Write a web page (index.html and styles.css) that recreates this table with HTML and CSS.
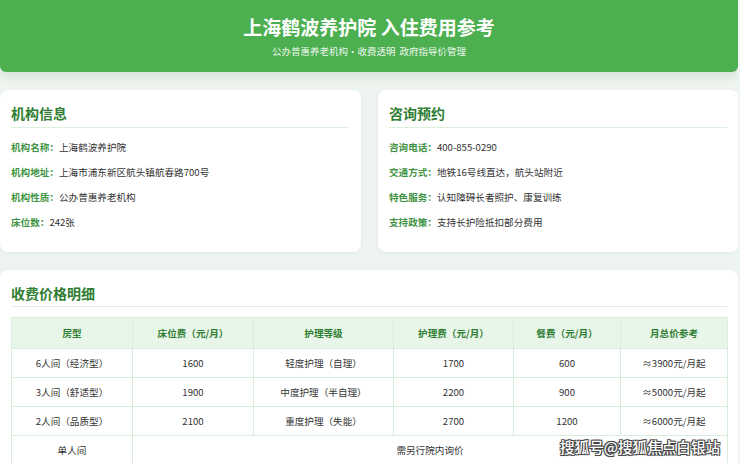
FILE: index.html
```html
<!DOCTYPE html>
<html lang="zh-CN">
<head>
<meta charset="utf-8">
<title>上海鹤波养护院 入住费用参考</title>
<link rel="stylesheet" href="styles.css">
</head>
<body>
<div class="page">
  <header class="header">
    <h1 class="header-title">上海鹤波养护院 入住费用参考</h1>
    <p class="header-sub">公办普惠养老机构·收费透明 政府指导价管理</p>
  </header>

  <section class="info-row">
    <div class="card">
      <h2 class="card-title">机构信息</h2>
      <div class="rows">
        <div class="row"><span class="label">机构名称：</span>上海鹤波养护院</div>
        <div class="row"><span class="label">机构地址：</span>上海市浦东新区航头镇航春路700号</div>
        <div class="row"><span class="label">机构性质：</span>公办普惠养老机构</div>
        <div class="row"><span class="label">床位数：</span>242张</div>
      </div>
    </div>
    <div class="card">
      <h2 class="card-title">咨询预约</h2>
      <div class="rows">
        <div class="row"><span class="label">咨询电话：</span>400-855-0290</div>
        <div class="row"><span class="label">交通方式：</span>地铁16号线直达，航头站附近</div>
        <div class="row"><span class="label">特色服务：</span>认知障碍长者照护、康复训练</div>
        <div class="row"><span class="label">支持政策：</span>支持长护险抵扣部分费用</div>
      </div>
    </div>
  </section>

  <section class="card price-card">
    <h2 class="card-title">收费价格明细</h2>
    <table class="price-table">
      <colgroup>
        <col class="c1"><col class="c2"><col class="c3"><col class="c4"><col class="c5"><col class="c6">
      </colgroup>
      <thead>
        <tr><th>房型</th><th>床位费（元/月）</th><th>护理等级</th><th>护理费（元/月）</th><th>餐费（元/月）</th><th>月总价参考</th></tr>
      </thead>
      <tbody>
        <tr><td>6人间（经济型）</td><td>1600</td><td>轻度护理（自理）</td><td>1700</td><td>600</td><td>≈3900元/月起</td></tr>
        <tr><td>3人间（舒适型）</td><td>1900</td><td>中度护理（半自理）</td><td>2200</td><td>900</td><td>≈5000元/月起</td></tr>
        <tr><td>2人间（品质型）</td><td>2100</td><td>重度护理（失能）</td><td>2700</td><td>1200</td><td>≈6000元/月起</td></tr>
        <tr><td>单人间</td><td colspan="5">需另行院内询价</td></tr>
      </tbody>
    </table>
  </section>

  <div class="watermark">搜狐号@搜狐焦点白银站</div>
</div>
</body>
</html>
```
FILE: styles.css
```css
* { box-sizing: border-box; }
html, body { margin: 0; padding: 0; }
body {
  background: #eef4ef;
  font-family: "Noto Sans CJK SC", "Noto Sans", sans-serif;
  color: #333;
  overflow: hidden;
}
.page {
  width: 738px;
  position: relative;
  height: 463px;
  overflow: hidden;
}
.header {
  height: 72px;
  background: #4caf50;
  border-radius: 0 0 6px 6px;
  box-shadow: 0 4px 10px rgba(40, 90, 40, 0.12);
  color: #fff;
  text-align: center;
  padding-top: 13px;
}
.header-title {
  margin: 0;
  font-size: 19px;
  line-height: 28px;
  font-weight: 700;
}
.header-sub {
  margin: 3px 0 0;
  font-size: 9.5px;
  line-height: 14px;
  color: rgba(255, 255, 255, 0.92);
  word-spacing: 2px;
}
.info-row {
  margin-top: 18px;
  display: grid;
  grid-template-columns: 361px 361px;
  column-gap: 17px;
}
.card {
  background: #fff;
  border-radius: 8px;
  box-shadow: 0 1px 4px rgba(0, 0, 0, 0.05);
  padding: 13px 12px 17px 11px;
}
.info-row .card { height: 162px; }
.card-title {
  margin: 0;
  font-size: 14px;
  line-height: 20px;
  font-weight: 700;
  color: #2e7d32;
  padding-bottom: 4px;
  border-bottom: 1px solid #ddefdd;
}
.rows { margin-top: 7px; }
.row {
  font-size: 9.6px;
  line-height: 25px;
  color: #333;
  white-space: nowrap;
}
.label {
  color: #3f9443;
  font-weight: 700;
}
.price-card {
  margin-top: 18px;
  padding: 13px 11px;
  height: 220px;
}
.price-card .card-title { padding-bottom: 3px; }
.price-table {
  margin-top: 10px;
  width: 716px;
  border-collapse: collapse;
  table-layout: fixed;
  font-size: 9.6px;
}
.c1 { width: 121px; }
.c2 { width: 121px; }
.c3 { width: 140px; }
.c4 { width: 120px; }
.c5 { width: 107px; }
.c6 { width: 107px; }
.price-table th,
.price-table td {
  border: 1px solid #d8eeda;
  text-align: center;
  padding: 0;
}
.price-table th {
  height: 31px;
  background: #e8f5e9;
  color: #2e7d32;
  font-weight: 700;
}
.price-table td {
  height: 29px;
  color: #333;
}
.watermark {
  position: absolute;
  left: 560px;
  top: 436px;
  font-size: 14.6px;
  line-height: 22px;
  color: #fff;
  font-weight: 500;
  text-shadow: -1px -1px 0 #444, 1px -1px 0 #444, -1px 1px 0 #444, 1px 1px 0 #444, 0 0 2px #222;
  white-space: nowrap;
}
```
